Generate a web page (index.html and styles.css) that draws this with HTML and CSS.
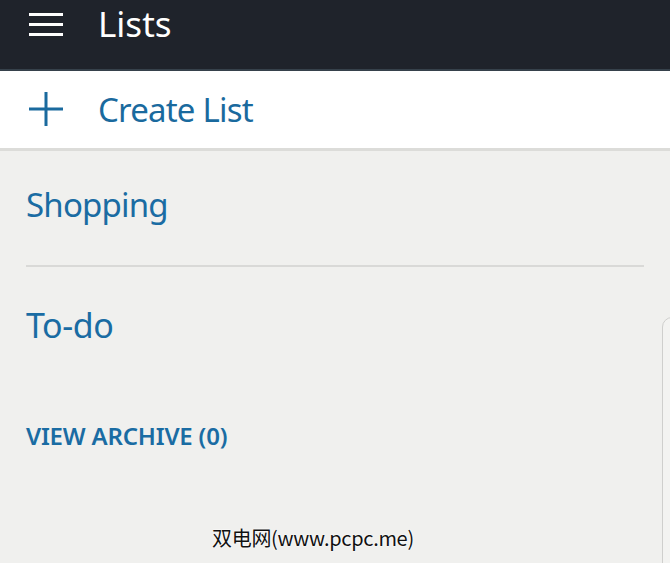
FILE: index.html
```
<!DOCTYPE html>
<html>
<head>
<meta charset="utf-8">
<link rel="stylesheet" href="styles.css">
</head>
<body>
<header class="topbar">
  <svg class="menu-icon" width="34" height="26" viewBox="0 0 34 26">
    <rect x="0" y="1" width="34" height="3" fill="#ffffff"/>
    <rect x="0" y="11" width="34" height="3" fill="#ffffff"/>
    <rect x="0" y="21" width="34" height="3" fill="#ffffff"/>
  </svg>
  <h1 class="title">Lists</h1>
</header>
<div class="create-row">
  <svg class="plus-icon" width="34" height="34" viewBox="0 0 34 34">
    <rect x="0" y="15.5" width="34" height="3" fill="#1a6a9e"/>
    <rect x="15.5" y="0" width="3" height="34" fill="#1a6a9e"/>
  </svg>
  <span class="create-label">Create List</span>
</div>
<main class="lists">
  <div class="list-item compact">Shopping</div>
  <div class="divider"></div>
  <div class="list-item second">To-do</div>
  <div class="archive">VIEW ARCHIVE (0)</div>
</main>
<div class="side-panel"></div>
<div class="watermark">双电网(www.pcpc.me)</div>
</body>
</html>
```
FILE: styles.css
```
* { box-sizing: border-box; margin: 0; padding: 0; }
html, body { width: 670px; height: 563px; overflow: hidden; }
body {
  background: #f0f0ee;
  font-family: "Noto Sans", "Open Sans", sans-serif;
  position: relative;
}
.topbar {
  height: 71px;
  background: #1f232b;
  border-bottom: 2px solid #36414b;
  display: flex;
  align-items: flex-start;
  padding-left: 29px;
}
.menu-icon { margin-top: 12px; flex: none; }
.title {
  margin-left: 35px;
  margin-top: -2px;
  color: #ffffff;
  font-weight: 400;
  font-size: 35px;
  line-height: 52px;
}
.create-row {
  height: 80px;
  background: #ffffff;
  border-bottom: 3px solid #dcdcd9;
  display: flex;
  align-items: center;
  padding-left: 29px;
}
.plus-icon { flex: none; margin-top: -2px; }
.create-label {
  margin-left: 35px;
  color: #1a6a9e;
  font-size: 33px;
  line-height: 40px;
  margin-top: 0;
  letter-spacing: -0.8px;
}
.lists { padding: 0 26px; }
.list-item {
  color: #1a6ca3;
  font-size: 34px;
  line-height: 40px;
  letter-spacing: -0.4px;
}
.list-item.compact {
  margin-top: 34px;
  font-size: 33px;
  letter-spacing: -0.8px;
}
.divider {
  height: 2px;
  background: #d9d9d7;
  margin-top: 40px;
}
.list-item.second { margin-top: 38px; }
.archive {
  margin-top: 76px;
  color: #1a6ca3;
  font-size: 24px;
  font-weight: 600;
  line-height: 30px;
  letter-spacing: -0.2px;
}
.side-panel {
  position: absolute;
  left: 662px;
  top: 317px;
  width: 30px;
  height: 260px;
  border: 1px solid #cfcfcd;
  border-radius: 10px 0 0 0;
  background: #f3f3f1;
}
.watermark {
  position: absolute;
  left: 212px;
  top: 524px;
  color: #111111;
  font-family: "Noto Sans CJK SC", "DejaVu Sans", sans-serif;
  font-size: 20px;
  line-height: 28px;
  letter-spacing: -0.3px;
  text-shadow: 0 0 2px #ffffff, 0 0 2px #ffffff;
}
```
